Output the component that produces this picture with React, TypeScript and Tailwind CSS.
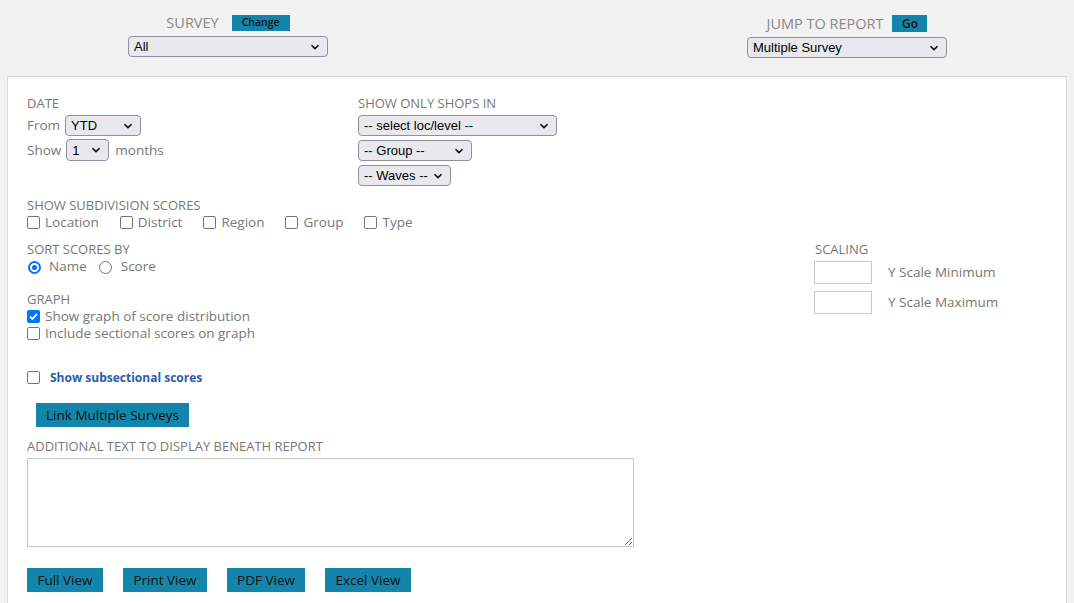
import React from "react";

const Chevron = () => (
  <svg width="10" height="6" viewBox="0 0 10 6" className="shrink-0">
    <path d="M1.5 1.2 L5 4.6 L8.5 1.2" fill="none" stroke="#111" strokeWidth="1.6" />
  </svg>
);

function FakeSelect({ label, w, h = 21 }: { label: string; w: number; h?: number }) {
  return (
    <div
      className="flex items-center justify-between rounded-[4px] border border-[#8f8f9d] bg-[#e9e9ed] pl-[5px] pr-[7px] text-[13px] text-black"
      style={{ width: w, height: h, fontFamily: '"Liberation Sans", Arial, sans-serif' }}
    >
      <span className="leading-none">{label}</span>
      <Chevron />
    </div>
  );
}

function Box({ checked = false }: { checked?: boolean }) {
  if (checked)
    return (
      <span className="flex h-[13px] w-[13px] shrink-0 items-center justify-center rounded-[2px] bg-[#0075ff]">
        <svg width="11" height="11" viewBox="0 0 11 11">
          <path d="M2 5.6 L4.4 8 L9 2.8" fill="none" stroke="#fff" strokeWidth="1.8" />
        </svg>
      </span>
    );
  return <span className="block h-[13px] w-[13px] shrink-0 rounded-[2px] border border-[#767676] bg-white" />;
}

function Radio({ checked = false }: { checked?: boolean }) {
  return checked ? (
    <span className="flex h-[13px] w-[13px] shrink-0 items-center justify-center rounded-full border-[2px] border-[#0075ff] bg-white">
      <span className="block h-[5px] w-[5px] rounded-full bg-[#0075ff]" />
    </span>
  ) : (
    <span className="block h-[13px] w-[13px] shrink-0 rounded-full border border-[#767676] bg-white" />
  );
}

const Label = ({ children, className = "" }: { children: React.ReactNode; className?: string }) => (
  <div className={"h-[17px] text-[13px] leading-[17px] text-[#777] " + className}>{children}</div>
);

const Btn = ({ children, className = "" }: { children: React.ReactNode; className?: string }) => (
  <div className={"flex h-[24px] items-center justify-center bg-[#1485aa] text-[13.5px] text-[#111] " + className}>
    {children}
  </div>
);

export default function App() {
  return (
    <div
      className="min-h-screen bg-[#f2f2f2] text-[#777]"
      style={{ fontFamily: '"Open Sans", "Noto Sans", sans-serif' }}
    >
      {/* header */}
      <div className="flex h-[76px] pt-[15px]">
        <div className="ml-[128px] flex w-[200px] flex-col items-center">
          <div className="flex h-[16px] items-center">
            <span className="text-[14.5px] leading-[16px] text-[#888]">SURVEY</span>
            <span className="ml-[13px] flex h-[16px] w-[58px] items-center justify-center bg-[#1485aa] text-[10.5px] font-semibold text-[#111]">
              Change
            </span>
          </div>
          <div className="mt-[5px]">
            <FakeSelect label="All" w={200} h={21} />
          </div>
        </div>
        <div className="ml-[419px] flex w-[200px] flex-col items-center">
          <div className="flex h-[17px] items-center">
            <span className="text-[14.5px] leading-[16px] text-[#888]">JUMP TO REPORT</span>
            <span className="ml-[9px] flex h-[17px] w-[35px] items-center justify-center bg-[#1485aa] text-[12px] font-semibold text-[#111]">
              Go
            </span>
          </div>
          <div className="mt-[5px]">
            <FakeSelect label="Multiple Survey" w={200} h={21} />
          </div>
        </div>
      </div>

      {/* panel */}
      <div className="mx-[7px] h-[540px] border border-[#dcdcdc] bg-white pl-[19px] pt-[18px]">
        <div className="flex">
          <div className="w-[331px]">
            <Label>DATE</Label>
            <div className="mt-[3px] flex items-center gap-[5px]">
              <span className="text-[13.5px]">From</span>
              <FakeSelect label="YTD" w={76} h={21} />
            </div>
            <div className="mt-[3px] flex items-center">
              <span className="mr-[5px] text-[13.5px]">Show</span>
              <FakeSelect label="1" w={43} h={22} />
              <span className="ml-[6px] text-[13.5px]">months</span>
            </div>
          </div>
          <div>
            <Label>SHOW ONLY SHOPS IN</Label>
            <div className="mt-[3px] flex flex-col gap-[4px]">
              <FakeSelect label="-- select loc/level --" w={199} h={21} />
              <FakeSelect label="-- Group --" w={114} h={21} />
              <FakeSelect label="-- Waves --" w={93} h={21} />
            </div>
          </div>
        </div>

        <Label className="mt-[11px]">SHOW SUBDIVISION SCORES</Label>
        <div className="flex h-[17px] items-center text-[13.5px]">
          {["Location", "District", "Region", "Group", "Type"].map((t) => (
            <div key={t} className="mr-[21px] flex items-center gap-[5px]">
              <Box />
              <span>{t}</span>
            </div>
          ))}
        </div>

        <div className="mt-[10px] flex">
          <div className="w-[788px]">
            <Label>SORT SCORES BY</Label>
            <div className="mt-[1px] flex h-[17px] items-center text-[13.5px]">
              <span className="ml-[1px]">
                <Radio checked />
              </span>
              <span className="ml-[8px] -mt-[3px]">Name</span>
              <span className="ml-[12px]">
                <Radio />
              </span>
              <span className="ml-[9px] -mt-[3px]">Score</span>
            </div>
            <Label className="mt-[15px]">GRAPH</Label>
            <div className="flex h-[17px] items-center gap-[5px] text-[13.5px]">
              <Box checked />
              <span>Show graph of score distribution</span>
            </div>
            <div className="flex h-[17px] items-center gap-[5px] text-[13.5px]">
              <Box />
              <span>Include sectional scores on graph</span>
            </div>
          </div>
          <div>
            <Label>SCALING</Label>
            <div className="mt-[3px] flex items-center">
              <div className="-ml-[1px] h-[23px] w-[58px] border border-[#c8c8c8] bg-white" />
              <span className="ml-[16px] text-[13.5px]">Y Scale Minimum</span>
            </div>
            <div className="mt-[7px] flex items-center">
              <div className="-ml-[1px] h-[23px] w-[58px] border border-[#c8c8c8] bg-white" />
              <span className="ml-[16px] text-[13.5px]">Y Scale Maximum</span>
            </div>
          </div>
        </div>

        <div className="mt-[27px] flex h-[17px] items-center">
          <Box />
          <span className="ml-[10px] text-[12px] font-bold text-[#2b5cad]">Show subsectional scores</span>
        </div>

        <Btn className="ml-[9px] mt-[17px] w-[153px]">Link Multiple Surveys</Btn>

        <Label className="mt-[11px]">ADDITIONAL TEXT TO DISPLAY BENEATH REPORT</Label>
        <textarea className="mt-[3px] block h-[89px] w-[607px] border border-[#c8c8c8] bg-white outline-none" />

        <div className="mt-[21px] flex gap-[20px]">
          <Btn className="w-[76px]">Full View</Btn>
          <Btn className="w-[84px]">Print View</Btn>
          <Btn className="w-[78px]">PDF View</Btn>
          <Btn className="w-[86px]">Excel View</Btn>
        </div>
      </div>
    </div>
  );
}
